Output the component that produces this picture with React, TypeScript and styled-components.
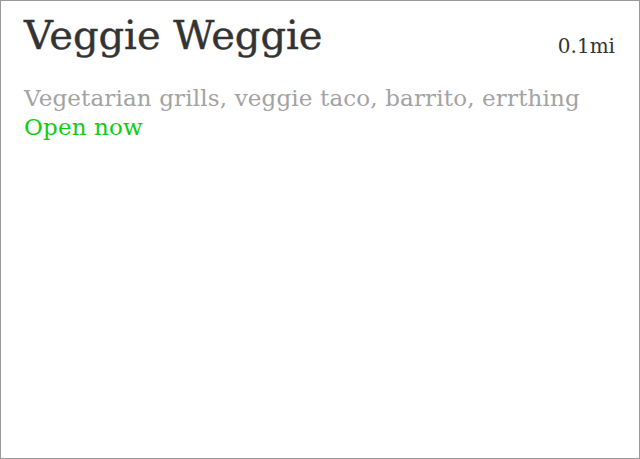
import React from 'react';
import styled, { createGlobalStyle } from 'styled-components';

const GlobalStyle = createGlobalStyle`
    html, body {
        margin: 0;
        padding: 0;
        background: #fff;
    }
`;

const Card = styled.div`
    box-sizing: border-box;
    width: 640px;
    height: 459px;
    border: 1px solid #999;
    padding: 9px 24px 0 23px;
    font-family: 'DejaVu Serif', 'Liberation Serif', serif;
    color: #333;
`;

const Header = styled.div`
    display: flex;
    justify-content: space-between;
    align-items: flex-start;
`;

const Title = styled.h1`
    margin: 0;
    font-size: 40px;
    font-weight: normal;
    line-height: 50px;
    -webkit-text-stroke: 0.4px #333;
`;

const Distance = styled.span`
    margin-top: 26px;
    font-size: 20px;
    line-height: 20px;
    color: #333;
`;

const Line = styled.p<{ $tone: string }>`
    margin: 0;
    font-size: 23px;
    line-height: 29px;
    color: ${(p) => p.$tone};
    letter-spacing: 0.15px;
`;

const Info = styled.div`
    margin-top: 24px;
`;

export default function App() {
    return (
        <>
            <GlobalStyle />
            <Card>
                <Header>
                    <Title>Veggie Weggie</Title>
                    <Distance>0.1mi</Distance>
                </Header>
                <Info>
                    <Line $tone="#a3a3a3">Vegetarian grills, veggie taco, barrito, errthing</Line>
                    <Line $tone="#11cc11">Open now</Line>
                </Info>
            </Card>
        </>
    );
}
